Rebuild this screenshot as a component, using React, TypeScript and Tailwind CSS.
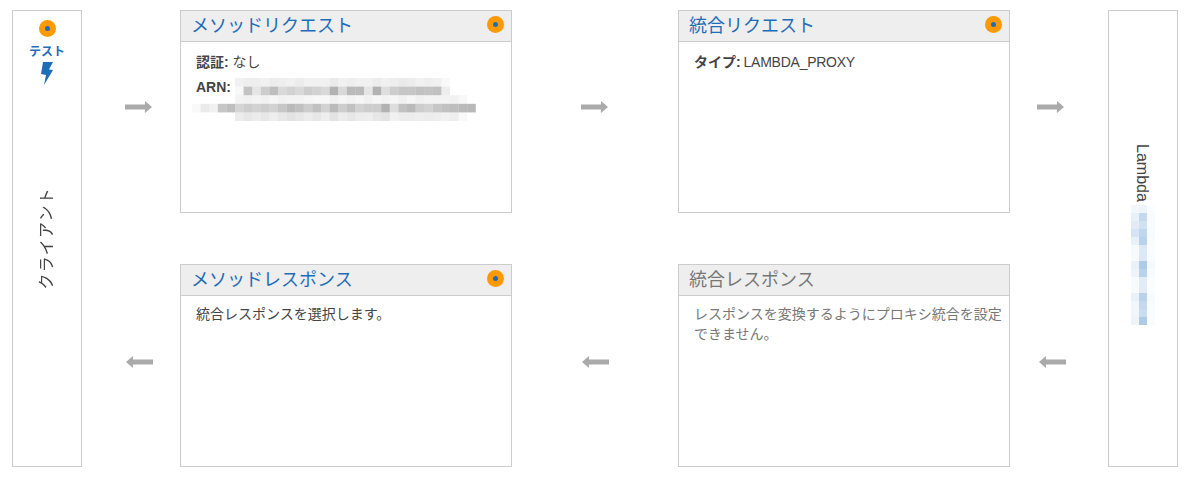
import React from 'react';

const fontFamily = 'font-["Liberation_Sans","Noto_Sans_CJK_JP",sans-serif]';

const Dot = ({ className = '' }: { className?: string }) => (
  <span className={`flex h-[17px] w-[17px] items-center justify-center rounded-full bg-[#ff9900] ${className}`}>
    <span className="h-[5px] w-[5px] rounded-full bg-[#1f6cb8]" />
  </span>
);

const Arrow = ({ left, className = '' }: { left?: boolean; className?: string }) => (
  <svg width="27" height="12" viewBox="0 0 27 12" className={`${left ? 'rotate-180' : ''} ${className}`}>
    <path d="M0 3.5h20V0l7 6-7 6V8.5H0z" fill="#aaaaaa" />
  </svg>
);

// pixelated area hiding the ARN value
const Mosaic = ({ rows, cell, tint }: { rows: number[][]; cell: number; tint: string }) => (
  <svg width={rows[0].length * cell} height={rows.length * cell} className="blur-[0.7px]">
    {rows.map((row, y) =>
      row.map((o, x) => (
        <rect key={x} x={x * cell} y={y * cell} width={cell} height={cell} fill={tint} opacity={o} />
      )),
    )}
  </svg>
);

const arnRows = [
  [0, 0, 0, 0, 0, .12, .14, .14, .12, .16, .14, .12, .16, .12, .12, .12, .18, .12, .14, .12, .12, .16, .12, .14, .18, .16, .12, .14, .12, .05, 0, 0, 0],
  [0, 0, 0, 0, 0, .06, .5, .22, .42, .55, .32, .38, .32, .42, .38, .32, .65, .32, .58, .58, .22, .65, .28, .42, .48, .48, .52, .5, .52, .15, 0, 0, 0],
  [0, 0, 0, 0, 0, .1, .12, .1, .12, .08, .12, .1, .1, .08, .06, .06, .12, .08, .1, .08, .12, .08, .1, .08, .12, .08, .12, .1, .1, .1, .12, .06, 0],
  [.05, .18, .12, .48, .55, .35, .42, .38, .42, .38, .48, .58, .52, .42, .52, .38, .58, .42, .52, .38, .42, .42, .65, .28, .52, .58, .42, .38, .48, .52, .55, .58, .6],
  [0, 0, 0, 0, 0, .16, .2, .16, .2, .14, .2, .24, .2, .16, .2, .14, .24, .16, .2, .16, .14, .2, .24, .12, .16, .16, .14, .16, .14, .12, .14, .05, 0],
];

const lambdaRows = [
  [.1, .14, .04], [.2, .5, .06], [.25, .4, .06], [.35, .55, .06], [.2, .6, .05], [.07, .3, .04], [.07, .3, .05],
  [.18, .7, .08], [.14, .6, .06], [.06, .25, .04], [.06, .25, .04], [.18, .6, .06], [.12, .5, .05], [.12, .45, .05],
  [.14, .7, .05],
];

const Card = ({
  title,
  muted,
  dot,
  bodyClass = 'pt-[10px]',
  children,
}: {
  title: string;
  muted?: boolean;
  dot?: boolean;
  bodyClass?: string;
  children: React.ReactNode;
}) => (
  <div className="flex h-[203px] w-[332px] flex-col border border-[#cccccc] bg-white">
    <div className="flex h-[31px] items-center justify-between border-b border-[#cccccc] bg-[#eeeeee] pl-[10px] pr-[7px]">
      <span className={`text-[18px] leading-none ${muted ? 'text-[#777777]' : 'text-[#1f6cb8]'}`}>{title}</span>
      {dot && <Dot className="-mt-[3px]" />}
    </div>
    <div className={`px-[15px] text-[14px] leading-[20px] text-[#444444] ${bodyClass}`}>{children}</div>
  </div>
);

export default function App() {
  return (
    <div className={`flex h-[480px] w-[1203px] bg-white pl-[12px] pt-[10px] ${fontFamily}`}>
      {/* client column */}
      <div className="flex h-[457px] w-[70px] flex-col items-center border border-[#cccccc] pt-[9px]">
        <Dot />
        <span className="mt-[8px] text-[12px] font-bold leading-[14px] text-[#1f6cb8]">テスト</span>
        <svg width="14" height="25" viewBox="0 0 14 25" className="mt-[2px]">
          <path d="M3 1h10L9 8.5l4 .5L4 24l2-10-5-1z" fill="#1f6cb8" />
        </svg>
        <span className="mt-[101px] rotate-180 text-[16px] leading-none tracking-[1.2px] text-[#444444] [text-orientation:sideways] [writing-mode:vertical-rl]">
          クライアント
        </span>
      </div>

      <div className="flex h-[457px] w-[98px] flex-col justify-between pb-[99px] pl-[43px] pt-[91px]">
        <Arrow />
        <Arrow left className="ml-[1px]" />
      </div>

      <div className="flex flex-col gap-[51px]">
        <Card title="メソッドリクエスト" dot>
          <p>
            <b>認証:</b> なし
          </p>
          <div className="relative mt-[5px]">
            <b>ARN:</b>
            <div className="absolute -left-[4px] top-[1px]">
              <Mosaic rows={arnRows} cell={8.6} tint="#888888" />
            </div>
          </div>
        </Card>
        <Card title="メソッドレスポンス" dot bodyClass="pt-[8px]">
          <p>統合レスポンスを選択します。</p>
        </Card>
      </div>

      <div className="flex h-[457px] w-[166px] flex-col justify-between pb-[99px] pl-[69px] pt-[91px]">
        <Arrow />
        <Arrow left className="ml-[1px]" />
      </div>

      <div className="flex flex-col gap-[51px]">
        <Card title="統合リクエスト" dot>
          <p>
            <b>タイプ:</b> <span className="-ml-[1px] tracking-[-0.25px]">LAMBDA_PROXY</span>
          </p>
        </Card>
        <Card title="統合レスポンス" muted bodyClass="pt-[8px]">
          <p className="-mr-[8px] text-[#777777]">レスポンスを変換するようにプロキシ統合を設定できません。</p>
        </Card>
      </div>

      <div className="flex h-[457px] w-[98px] flex-col justify-between pb-[99px] pl-[27px] pt-[91px]">
        <Arrow />
        <Arrow left className="ml-[2px]" />
      </div>

      {/* lambda column */}
      <div className="flex h-[457px] w-[70px] flex-col items-center border border-[#cccccc] pt-[133px]">
        <span className="-ml-[2px] text-[16px] leading-none text-[#444444] [writing-mode:vertical-rl]">Lambda</span>
        <div className="mt-[3px]">
          <Mosaic rows={lambdaRows} cell={8} tint="#8ab4dd" />
        </div>
      </div>
    </div>
  );
}
